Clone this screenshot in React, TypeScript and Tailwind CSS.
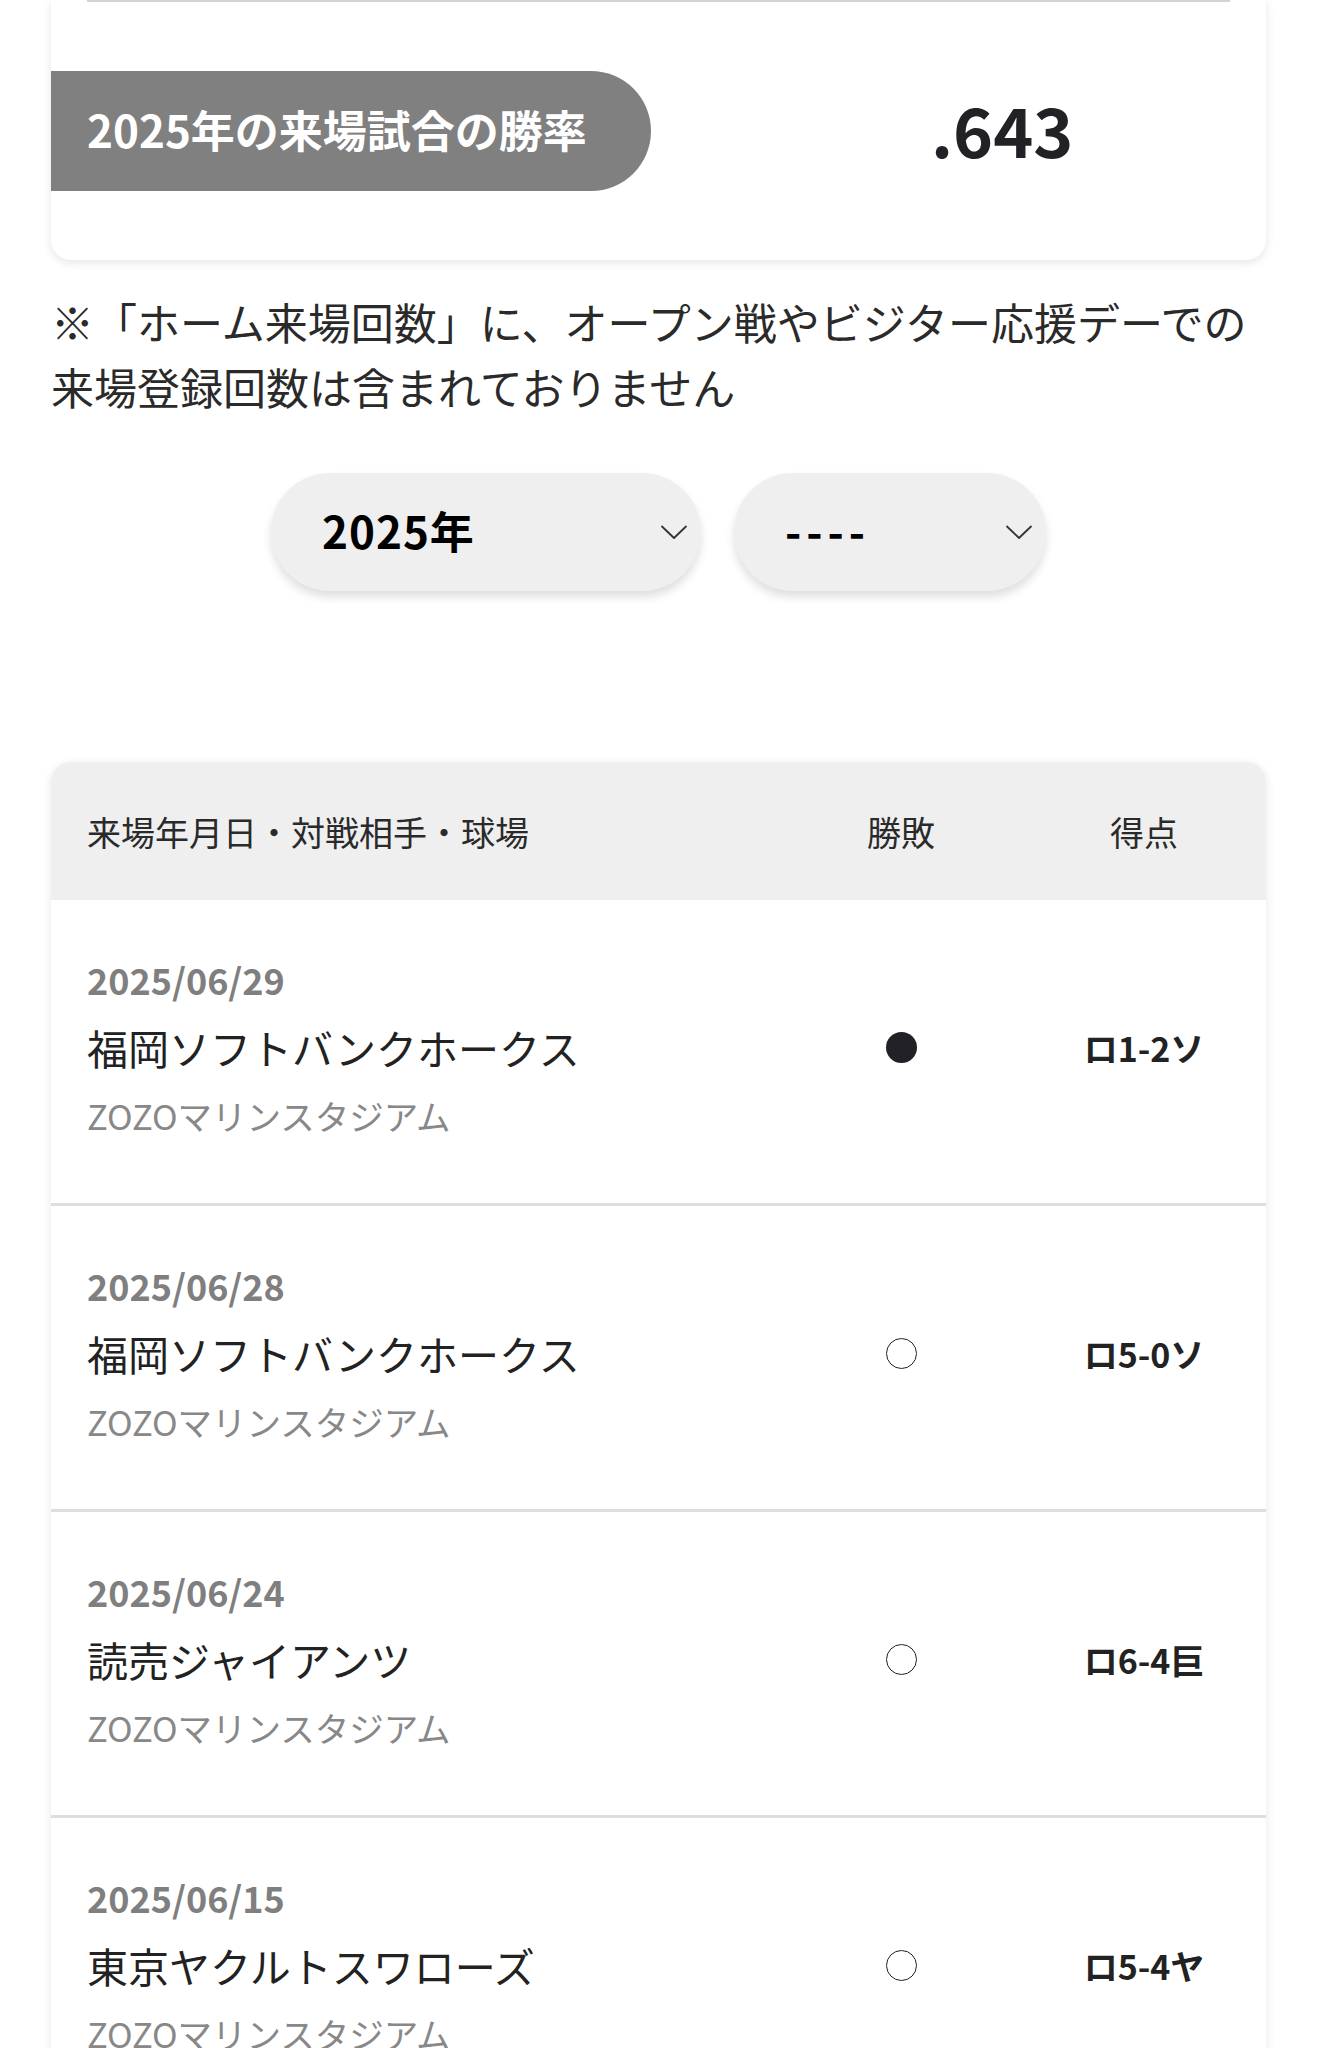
interface Game {
  date: string;
  opponent: string;
  stadium: string;
  win: boolean;
  score: string;
}

const games: Game[] = [
  { date: "2025/06/29", opponent: "福岡ソフトバンクホークス", stadium: "ZOZOマリンスタジアム", win: false, score: "ロ1-2ソ" },
  { date: "2025/06/28", opponent: "福岡ソフトバンクホークス", stadium: "ZOZOマリンスタジアム", win: true, score: "ロ5-0ソ" },
  { date: "2025/06/24", opponent: "読売ジャイアンツ", stadium: "ZOZOマリンスタジアム", win: true, score: "ロ6-4巨" },
  { date: "2025/06/15", opponent: "東京ヤクルトスワローズ", stadium: "ZOZOマリンスタジアム", win: true, score: "ロ5-4ヤ" },
];

function Chevron() {
  return (
    <svg width="28" height="16" viewBox="0 0 28 16" fill="none" className="shrink-0">
      <polyline points="1.5,2 14,14 26.5,2" stroke="#333" strokeWidth="1.8" strokeLinejoin="round" />
    </svg>
  );
}

function SelectBox({ label, width, tracking }: { label: string; width: string; tracking: string }) {
  return (
    <div
      className={`${width} h-[118px] flex items-center justify-between pl-[51px] pr-[13px] rounded-full bg-[#efefef] shadow-[0_6px_10px_rgba(0,0,0,0.13)]`}
    >
      <span className={`text-[44px] font-bold text-black pb-[4px] ${tracking}`}>{label}</span>
      <Chevron />
    </div>
  );
}

export default function App() {
  return (
    <div
      className="w-full h-[2048px] overflow-hidden bg-white px-[51px]"
      style={{ fontFamily: '"Noto Sans CJK JP", "Noto Sans", sans-serif' }}
    >
      {/* Win rate card */}
      <div className="bg-white rounded-b-[20px] shadow-[0_3px_10px_rgba(0,0,0,0.1)] px-[36px] pb-[69px]">
        <div className="h-[2px] bg-[#d2d2d2]" />
        <div className="flex items-center mt-[69px] -ml-[36px]">
          <div className="w-[600px] h-[120px] shrink-0 flex items-center pl-[36px] pb-[4px] bg-[#808080] rounded-r-full">
            <span className="text-[44px] font-bold text-white leading-none">2025年の来場試合の勝率</span>
          </div>
          <span className="ml-[280px] pb-[4px] text-[68px] font-bold text-[#222226] leading-none">.643</span>
        </div>
      </div>

      {/* Note */}
      <p className="mt-[29px] text-[43px] leading-[65px] text-[#2a2a2a] whitespace-nowrap">
        ※「ホーム来場回数」に、オープン戦やビジター応援デーでの
        <br />
        来場登録回数は含まれておりません
      </p>

      {/* Filters */}
      <div className="mt-[54px] flex justify-center gap-[33px]">
        <SelectBox label="2025年" width="w-[430px]" tracking="tracking-[1px]" />
        <SelectBox label="----" width="w-[312px]" tracking="tracking-[5px]" />
      </div>

      {/* Games table */}
      <div className="mt-[171px] bg-white rounded-t-[20px] overflow-hidden shadow-[0_2px_10px_rgba(0,0,0,0.1)]">
        <div className="h-[138px] bg-[#efefef] px-[36px] grid grid-cols-[1fr_160px_172px] gap-x-[77px] items-center text-[34px] text-[#2a2a2a]">
          <span>来場年月日・対戦相手・球場</span>
          <span className="text-center">勝敗</span>
          <span className="text-center">得点</span>
        </div>

        {games.map((game, idx) => (
          <div
            key={`${game.date}-${idx}`}
            className="h-[306px] pb-[9px] border-b-[3px] border-[#dedede] px-[36px] grid grid-cols-[1fr_160px_172px] gap-x-[77px] items-center"
          >
            <div className="flex flex-col">
              <span className="text-[36px] leading-[56px] font-bold text-[#7f7f7f]">{game.date}</span>
              <span className="text-[41px] leading-[80px] text-[#222]">{game.opponent}</span>
              <span className="text-[34.5px] leading-[56px] text-[#888]">{game.stadium}</span>
            </div>
            <div className="flex justify-center">
              {game.win ? (
                <span className="w-[31px] h-[31px] rounded-full border-[1.5px] border-[#222]" />
              ) : (
                <span className="w-[31px] h-[31px] rounded-full bg-[#222226]" />
              )}
            </div>
            <span className="text-center text-[34px] font-bold text-[#222]">{game.score}</span>
          </div>
        ))}
      </div>
    </div>
  );
}
